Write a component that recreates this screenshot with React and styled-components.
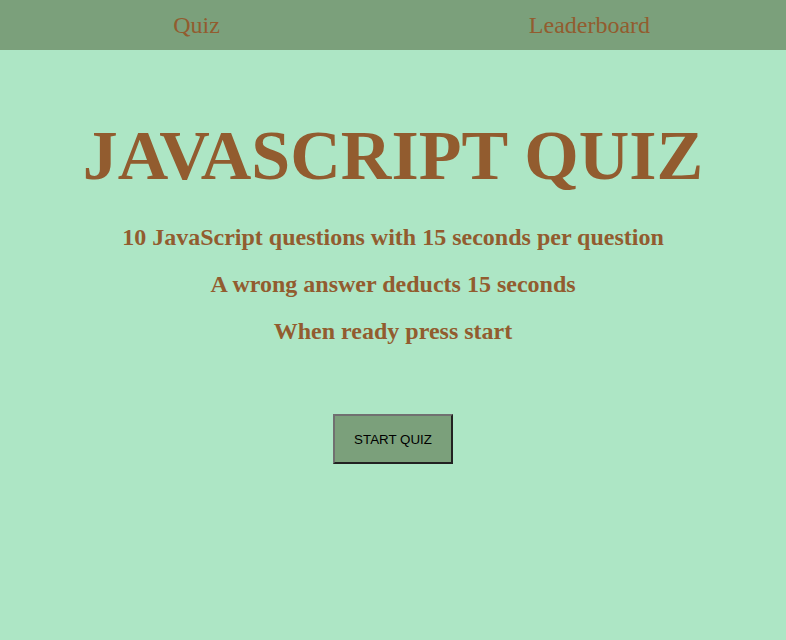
import React from "react";
import styled, { createGlobalStyle } from "styled-components";

const Global = createGlobalStyle`
  html, body { margin: 0; padding: 0; }
  body {
    background: #ade6c5;
    font-family: "Liberation Serif", "Times New Roman", serif;
    min-height: 640px;
  }
`;

const Nav = styled.nav`
  display: flex;
  height: 50px;
  background: #7ba07b;
`;

const NavLink = styled.a`
  flex: 1;
  display: flex;
  align-items: center;
  justify-content: center;
  font-size: 24px;
  color: #925c2f;
  text-decoration: none;
  cursor: pointer;
`;

const Main = styled.main`
  display: flex;
  flex-direction: column;
  align-items: center;
  color: #925c2f;
`;

const Title = styled.h1`
  margin: 66px 0 0;
  font-size: 70px;
  font-weight: bold;
  line-height: normal;
`;

const Info = styled.h2`
  margin: ${(p) => p.$top}px 0 0;
  font-size: 24px;
  font-weight: bold;
  line-height: normal;
`;

const StartButton = styled.button`
  margin-top: 69px;
  width: 120px;
  height: 50px;
  background: #7ba07b;
  border: 2px solid;
  border-color: #707070 #222 #222 #707070;
  font-family: "Liberation Sans", Arial, sans-serif;
  font-size: 13.33px;
  color: #000;
  cursor: pointer;
`;

export default function App() {
  return (
    <>
      <Global />
      <Nav>
        <NavLink>Quiz</NavLink>
        <NavLink>Leaderboard</NavLink>
      </Nav>
      <Main>
        <Title>JAVASCRIPT QUIZ</Title>
        <Info $top={28}>10 JavaScript questions with 15 seconds per question</Info>
        <Info $top={20}>A wrong answer deducts 15 seconds</Info>
        <Info $top={20}>When ready press start</Info>
        <StartButton>START QUIZ</StartButton>
      </Main>
    </>
  );
}
